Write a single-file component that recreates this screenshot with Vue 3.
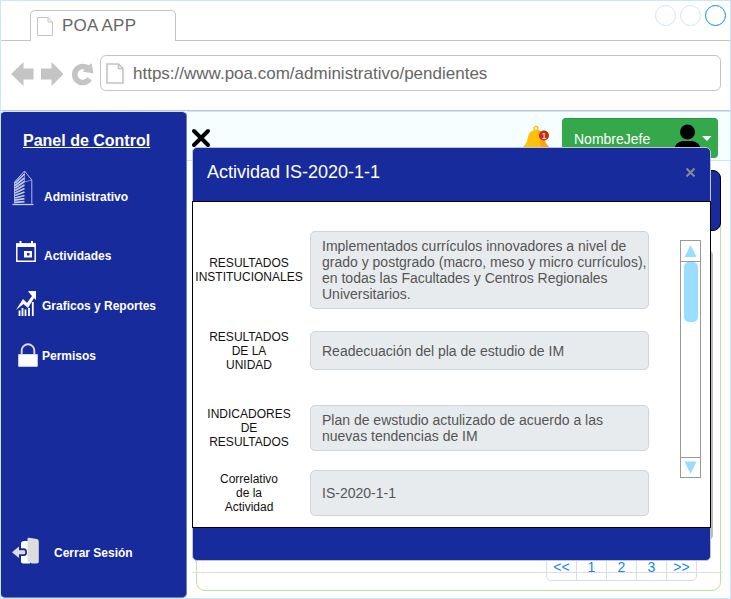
<script setup>
const menu = [
  { id: 'building', label: 'Administrativo' },
  { id: 'calendar', label: 'Actividades' },
  { id: 'chart', label: 'Graficos y Reportes' },
  { id: 'lock', label: 'Permisos' },
]
const fields = [
  { id: 'inst', label: ['RESULTADOS', 'INSTITUCIONALES'], value: ['Implementados currículos innovadores a nivel de', 'grado y postgrado (macro, meso y micro currículos),', 'en todas las Facultades y Centros Regionales', 'Universitarios.'] },
  { id: 'unit', label: ['RESULTADOS', 'DE LA', 'UNIDAD'], value: ['Readecuación del pla de estudio de IM'] },
  { id: 'ind', label: ['INDICADORES', 'DE', 'RESULTADOS'], value: ['Plan de ewstudio actulizado de acuerdo a las', 'nuevas tendencias de IM'] },
  { id: 'corr', label: ['Correlativo', 'de la', 'Actividad'], value: ['IS-2020-1-1'] },
]
const pages = ['<<', '1', '2', '3', '>>']
</script>

<template>
  <div class="window">
    <header class="tabs">
      <div class="strip"></div>
      <div class="tab">
        <svg class="doc-small" width="17" height="20" viewBox="0 0 17 20" fill="none" stroke="#c4c4c4"><path d="M.5 .5H11L15.500 5V18.500H.5ZM11 .5V5H15.500" /></svg>
        <span>POA APP</span>
      </div>
      <div class="strip grow">
        <i class="dot"></i><i class="dot"></i><i class="dot active"></i>
      </div>
    </header>

    <div class="toolbar">
      <svg class="nav-icons" width="84" height="28" viewBox="0 0 84 28" fill="#c4c4c4">
        <path d="M0 14L12.500 2V8.500H22.500V19.500H12.500V26Z" />
        <path d="M52.500 14L40.500 2V8.500H30V19.500H40.500V26Z" />
        <path d="M78.500 18.800A8 8 0 1 1 77.500 9" fill="none" stroke="#c4c4c4" stroke-width="5.600" />
        <path d="M80.500 3L82.500 13.500L71.500 11.500Z" />
      </svg>
      <div class="url">
        <svg width="18" height="21" viewBox="0 0 18 21" fill="none" stroke="#c4c4c4" stroke-width="1.600"><path d="M1 1H12.500L17 5.500V20H1ZM12.500 1V5.500H17" /></svg>
        <span>https://www.poa.com/administrativo/pendientes</span>
      </div>
    </div>

    <div class="page">
      <aside>
        <h2>Panel de Control</h2>
        <div v-for="m in menu" :key="m.id" class="item" :class="m.id">
          <svg v-if="m.id === 'building'" width="22" height="36" viewBox="0 0 22 36" fill="none" stroke="#c3caeb">
            <path d="M.5 34.500H21.500" stroke-width="1.300" />
            <path d="M12.500 1L19.800 10V33.500M12.500 1L2.500 12V33.500" stroke-width=".9" />
            <path d="M3 13L12.500 4M3 15.500L12.500 8M3 18L12.500 11.500M3 20.500L12.500 15M3 23L12.500 18.500M3 25.500L12.500 22M3 28L12.500 25.500M3 30.200L12.500 28.700M3 32.300L12.500 31.700" stroke-width="1.700" />
            <path d="M12.500 1V12L19.500 10" stroke-width=".6" />
          </svg>
          <svg v-else-if="m.id === 'calendar'" width="22" height="22" viewBox="0 0 22 22">
            <path d="M1.800 3H20.200V20.200H1.800Z" fill="none" stroke="#fff" stroke-width="1.500" />
            <path d="M1 2.500H21V6H1ZM4.500 0H6.500V4H4.500ZM16 0H18V4H16ZM9 10H17V16.500H9Z" fill="#fff" />
            <path d="M12 12H14.500V14.500H12Z" fill="#182b9c" />
          </svg>
          <svg v-else-if="m.id === 'chart'" width="21" height="27" viewBox="0 0 21 27">
            <path d="M0 20L7 9L11 13L16 6L12.500 2V1H20V10L18 8L12 18L7.500 14Z" fill="#fff" />
            <path d="M3.500 20.500V26M6.500 18V26M9.500 19.500V26M13 18V26M16.800 12V26" stroke="#fff" stroke-width="1.800" />
          </svg>
          <svg v-else width="20" height="24" viewBox="0 0 20 24">
            <path d="M3.700 12V7.500A6.300 6.300 0 0 1 16.300 7.500V12" fill="none" stroke="#d9d9d9" stroke-width="1.900" />
            <path d="M.7 11.500H19.300V23.300H.7Z" fill="#fff" stroke="#ddd" />
          </svg>
          <span>{{ m.label }}</span>
        </div>
        <div class="item logout">
          <svg width="28" height="28" viewBox="0 0 28 28">
            <path d="M9 7Q9 4 12 4H18V26.500H11Q9 26.500 9 24.500Z" fill="#fff" />
            <path d="M17 .8L25 2Q26.800 2.500 26.800 4.500V24.500Q26.800 26.500 25 26.500H20L15.500 24.500V2Q15.500 .5 17 .8Z" fill="#ddd" />
            <path d="M6 11.300H12Q15 11.300 15 15.200T12 19H6Z" fill="#182b9c" />
            <path d="M0 15.200L7 9.500V13.200H12Q13.300 13.200 13.300 15.200T12 17.200H7V21Z" fill="#ddd" />
          </svg>
          <span>Cerrar Sesión</span>
        </div>
      </aside>

      <main>
        <nav>
          <svg class="close-menu" width="20" height="20" viewBox="0 0 20 20"><path d="M3 3L17 17M17 3L3 17" stroke="#000" stroke-width="4" stroke-linecap="round" /></svg>
          <svg class="bell" width="27" height="27" viewBox="0 0 27 27">
            <circle cx="13" cy="3.500" r="2" fill="none" stroke="#ffbb08" stroke-width="1.300" />
            <path d="M0 22Q4 18.500 5 12Q6 5 13 5T21 12Q22 18.500 26 22V24H0Z" fill="#ffc10a" />
            <path d="M14 5Q20 6 21 12Q22 18.500 26 22V24H18Q17 13 14 5Z" fill="#ffa414" />
            <circle cx="21" cy="10.500" r="5" fill="#cc2b10" />
            <text x="21" y="13.800" text-anchor="middle" fill="#fff" font-size="9">1</text>
          </svg>
          <div class="user">
            <span>NombreJefe</span>
            <svg width="46" height="34" viewBox="0 0 46 34">
              <circle cx="13.500" cy="8" r="7.500" />
              <path d="M0 33V26Q1 18 9 17H18Q26 18 27 26V33Z" />
              <path d="M28 12H37.500L33 17Z" fill="#fff" />
            </svg>
          </div>
        </nav>
        <section class="panel">
          <div class="panel-head"></div>
          <div class="panel-card"></div>
          <div class="pager"><span v-for="p in pages" :key="p">{{ p }}</span></div>
          <hr />
        </section>
      </main>
    </div>

    <div class="modal">
      <div class="modal-head">
        <h1>Actividad IS-2020-1-1</h1>
        <svg width="11" height="11" viewBox="0 0 11 11"><path d="M1.500 1.500L9.500 9.500M9.500 1.500L1.500 9.500" stroke="#888b98" stroke-width="2" /></svg>
      </div>
      <div class="modal-body">
        <form>
          <div v-for="f in fields" :key="f.id" class="field" :class="f.id">
            <label><span v-for="l in f.label" :key="l">{{ l }}</span></label>
            <div class="value"><span v-for="l in f.value" :key="l">{{ l }}</span></div>
          </div>
        </form>
        <div class="scroll">
          <svg class="up" width="19" height="20" viewBox="0 0 19 20"><path d="M3.500 16L9.500 4L15.500 16Z" fill="#9df" /></svg>
          <div class="track"><div class="thumb"></div></div>
          <svg class="down" width="19" height="19" viewBox="0 0 19 19"><path d="M3.500 3.500H15.500L9.500 16Z" fill="#9df" /></svg>
        </div>
      </div>
      <div class="modal-foot"></div>
    </div>
  </div>
</template>

<style>
body { margin: 0; background: #fff; }
</style>

<style scoped>
* { box-sizing: border-box; }
.window { position: relative; width: 731px; height: 599px; overflow: hidden; border: 1px solid #cce5ff; background: #fff; font-family: "Liberation Sans", Arial, sans-serif; display: flex; flex-direction: column; }
svg { display: block; flex: none; }
span { white-space: pre; }
.tabs { display: flex; height: 40px; flex: none; }
.strip { width: 29px; border-bottom: 1px solid #c4c4c4; }
.strip.grow { flex: 1; display: flex; justify-content: flex-end; gap: 4px; padding: 4px 4px 0 0; }
.dot { width: 21px; height: 21px; border: 1px solid #cce5ff; border-radius: 50%; }
.dot.active { border-color: #1188ee; }
.tab { width: 146px; height: 31px; margin-top: 9px; border: 1px solid #c4c4c4; border-bottom: 0; border-radius: 5px 5px 0 0; display: flex; padding: 6px 0 0 6px; font-size: 17px; line-height: 18px; letter-spacing: .2px; color: #666; }
.tab span { margin-left: 8px; }
.toolbar { height: 70px; flex: none; display: flex; align-items: flex-start; border-bottom: 1px solid #c4c4c4; padding-top: 14px; }
.nav-icons { margin: 5px 0 0 10px; }
.url { width: 621px; height: 36px; margin-left: 5px; border: 1px solid #c4c4c4; border-radius: 6px; display: flex; align-items: center; padding-left: 5px; font-size: 17px; color: #666; }
.url span { margin: 2px 0 0 9px; }
.page { flex: 1; display: flex; min-height: 0; }
aside { width: 187px; margin-left: -1px; background: #182b9c; border: 1px solid #7080c4; border-top-color: #cce5ff; border-radius: 5px; color: #fff; flex: none; display: flex; flex-direction: column; }
h2 { margin: 19px 0 0 22px; font-size: 16px; line-height: 20px; text-decoration: underline; font-weight: bold; }
.item { display: flex; align-items: center; font-size: 12px; font-weight: bold; }
.building { height: 36px; margin: 19px 0 0 11px; }
.building span { margin: 17px 0 0 10px; }
.calendar { height: 22px; margin: 35px 0 0 14px; }
.calendar span { margin: 7px 0 0 7px; }
.chart { height: 27px; margin: 27px 0 0 15px; }
.chart span { margin: 4px 0 0 5px; }
.lock { height: 24px; margin: 26px 0 0 17px; }
.lock span { margin: 2px 0 0 4px; }
.logout { height: 28px; margin: auto 0 32px 11px; }
.logout span { margin: 3px 0 0 14px; }
main { flex: 1; min-width: 0; display: flex; flex-direction: column; }
nav { height: 50px; flex: none; background: #f5ffff; border: solid #cce5ff; border-width: 1px 0; display: flex; align-items: flex-start; }
.close-menu { margin: 16px 0 0 4px; }
.bell { margin: 13px 0 0 312px; }
.user { width: 156px; height: 40px; margin: 6px 0 0 12px; background: #36a84c; border-radius: 4px; padding: 5px 0 0 12px; display: flex; color: #fff; font-size: 14px; border-top: 1px solid #259b3c; }
.user span { margin: 7px 0 0; width: 100px; flex: none; }
.panel { width: 525px; height: 421px; margin: 9px 0 0 9px; border: 1px solid #b9e0a5; border-radius: 9px; display: grid; grid-template-columns: 100%; grid-template-rows: 61px 308px 41px; align-content: start; justify-items: end; }
.panel-head { width: 524px; height: 61px; margin: -1px -1px 0 0; background: #182b9c; border: 1px solid #000; border-radius: 8px; }
.panel-card { width: 500px; height: 290px; margin: 18px 7px 0 0; background: #bbb; border-radius: 5px; }
.pager { width: 151px; height: 28px; margin: 13px 23px 0 0; border: 1px solid #dadde3; border-radius: 5px; display: flex; color: #1188ee; font-size: 14px; }
.pager span { flex: 1; text-align: center; line-height: 26px; }
.pager span + span { border-left: 1px solid #dadde3; }
hr { width: 531px; border: 0; border-top: 1px solid #dadde3; margin: -9px -3px 0 0; }
.modal { position: absolute; left: 191px; top: 146px; width: 519px; height: 414px; display: flex; flex-direction: column; background: #182b9c; border: 1px solid #c4c4c4; border-radius: 5px; }
.modal-head { height: 53px; flex: none; display: flex; justify-content: space-between; align-items: center; padding: 0 14px 5px; color: #fff; }
h1 { font-size: 18px; line-height: 22px; font-weight: normal; margin: 0; }
.modal-body { height: 327px; flex: none; margin: 0 -1px; border: 1px solid #000; background: #fff; display: flex; }
form { width: 457px; flex: none; padding-top: 29px; }
.field { display: grid; grid-template-columns: 112px 339px; grid-template-rows: 100%; column-gap: 5px; align-items: center; }
label { display: flex; flex-direction: column; align-items: center; font-size: 12px; line-height: 14px; color: #111; }
.value { height: 100%; background: #e8ebee; border: 1px solid #ced4da; border-radius: 5px; padding-left: 11px; display: flex; flex-direction: column; justify-content: center; font-size: 14px; line-height: 16px; color: #555; }
.inst { height: 78px; }
.unit { height: 39px; margin-top: 22px; }
.ind { height: 46px; margin-top: 35px; }
.corr { height: 46px; margin-top: 19px; }
.scroll { width: 21px; height: 238px; margin: 38px 0 0 30px; border: 1px solid #999; display: flex; flex-direction: column; }
.track { flex: 1; border: solid #999; border-width: 1px 0; display: flex; justify-content: center; }
.thumb { width: 14px; height: 60px; border-radius: 5px; background: #9df; }
</style>
